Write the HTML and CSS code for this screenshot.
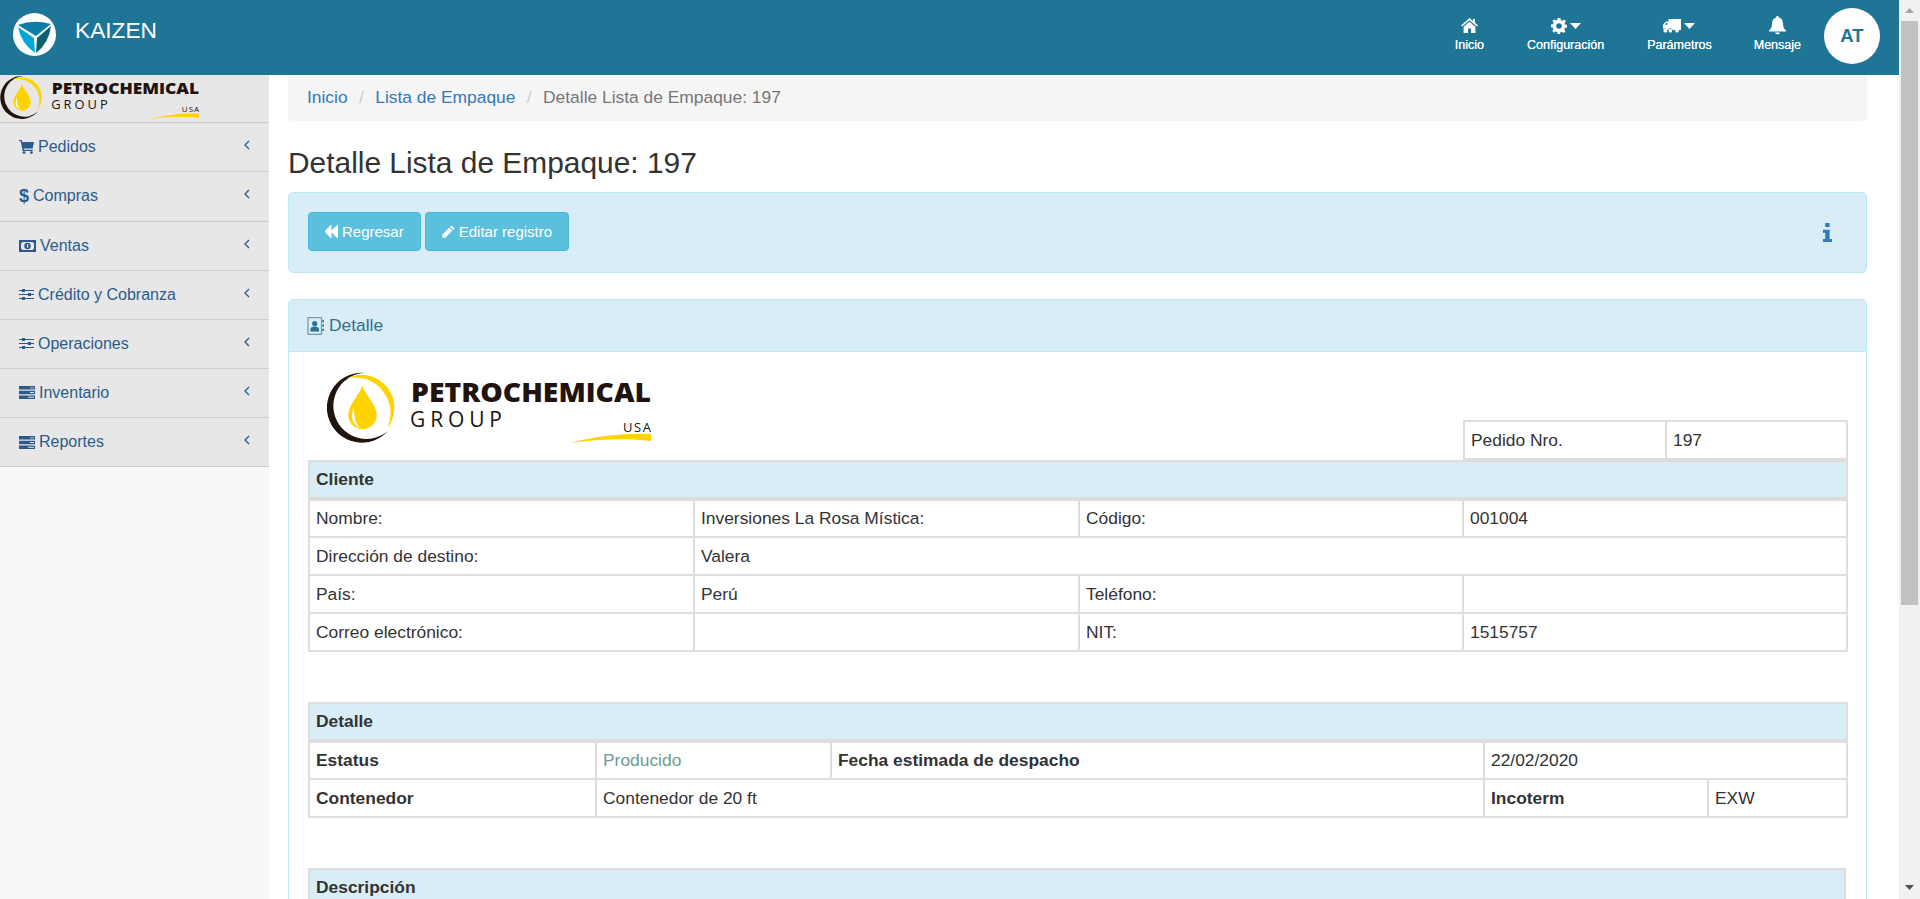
FILE: index.html
```html
<!DOCTYPE html>
<html lang="es">
<head>
<meta charset="utf-8">
<title>Detalle Lista de Empaque: 197</title>
<link rel="stylesheet" href="styles.css">
</head>
<body>
<div class="window">
  <div class="page">
    <header class="navbar">
      <div class="brand">
        <svg class="brand-logo" viewBox="0 0 43 43">
          <circle cx="21.5" cy="21.5" r="21.5" fill="#fff"/>
          <path d="M5 12 Q20 6 38 11 L23 23 Z" fill="#0b7ea6"/>
          <path d="M5 14 L21 25 L22 40 Q8 30 5 14 Z" fill="#00a8d8"/>
          <path d="M24 25 L38 13 Q36 30 23 40 Z" fill="#0c5f6c"/>
        </svg>
        <span class="brand-name">KAIZEN</span>
      </div>
      <nav class="topnav">
        <a class="topnav-item item-home">
          <span class="topnav-icon"><svg width="17" height="15" viewBox="0 0 17 15"><path d="M8.5 0 L12 3 V1 H14 V4.8 L17 7.5 L16 8.6 L8.5 2.2 L1 8.6 L0 7.5 Z M2.6 8.8 L8.5 3.8 L14.4 8.8 V15 H10 V10.5 H7 V15 H2.6 Z" fill="#fff"/></svg></span>
          <span>Inicio</span>
        </a>
        <a class="topnav-item item-conf">
          <span class="topnav-icon"><svg width="16" height="16" viewBox="0 0 16 16"><path fill-rule="evenodd" d="M6.6 0 H9.4 L9.8 2.2 L11.3 2.8 L13.1 1.5 L15 3.4 L13.6 5.2 L14.2 6.6 L16 7 V9.6 L13.9 10 L13.3 11.4 L14.5 13.2 L12.6 15 L10.8 13.7 L9.4 14.2 L9 16 H6.6 L6.2 14 L4.8 13.5 L3 14.7 L1.2 12.8 L2.4 11 L1.8 9.6 L0 9.2 V6.6 L2 6.2 L2.6 4.8 L1.4 3 L3.3 1.2 L5 2.4 L6.3 1.9 Z M8 5.2 A2.8 2.8 0 1 0 8 10.8 A2.8 2.8 0 1 0 8 5.2 Z" fill="#fff"/></svg><svg class="caret" width="11" height="6" viewBox="0 0 11 6"><path d="M0 0 H11 L5.5 6 Z" fill="#fff"/></svg></span>
          <span>Configuración</span>
        </a>
        <a class="topnav-item item-param">
          <span class="topnav-icon"><svg width="18" height="14" viewBox="0 0 18 14"><path fill-rule="evenodd" d="M5.5 0 H18 V11 H9.8 A2.8 2.8 0 0 0 4.6 11 H3.6 A2.6 2.6 0 0 0 0 10 V5.5 L2.8 2.5 H5.5 Z M1.6 5.8 H4.4 V3.8 H3.4 Z" fill="#fff"/><circle cx="2.3" cy="11.7" r="1.9" fill="#fff"/><circle cx="7.3" cy="11.7" r="1.9" fill="#fff"/><circle cx="14" cy="11.7" r="1.9" fill="#fff"/></svg><svg class="caret" width="11" height="6" viewBox="0 0 11 6"><path d="M0 0 H11 L5.5 6 Z" fill="#fff"/></svg></span>
          <span>Parámetros</span>
        </a>
        <a class="topnav-item item-msg">
          <span class="topnav-icon"><svg width="17" height="19" viewBox="0 0 17 19"><path d="M8.5 0 A1.4 1.4 0 0 1 9.9 1.6 C13 2.4 14 5 14 8 C14 11 15 13 17 14.5 V15.6 H0 V14.5 C2 13 3 11 3 8 C3 5 4 2.4 7.1 1.6 A1.4 1.4 0 0 1 8.5 0 Z M6 16.4 H11 A2.6 2.6 0 0 1 6 16.4 Z" fill="#fff"/></svg></span>
          <span>Mensaje</span>
        </a>
        <span class="avatar">AT</span>
      </nav>
    </header>

    <div class="main">
      <aside class="sidebar">
        <div class="side-logo">
          <svg class="logo-small" viewBox="0 0 325 75">
            <path d="M38 1.8 A35 35 0 1 0 61 60 A33.1 33.1 0 1 1 38 1.8 Z" fill="#21130d"/>
            <path d="M19.7 7.3 A33 33 0 0 1 60.3 57.3 A35.9 35.9 0 0 0 19.7 7.3 Z" fill="#ffd200"/>
            <path d="M35.3 15 C32 24 21.3 34 21.3 44 A14.2 14.2 0 0 0 49.7 44 C49.7 34 38.6 24 35.3 15 Z" fill="#ffd200"/>
            <path d="M27 36 C23 44 25 54 33 57 C28 52 27 44 27 36 Z" fill="#fff"/>
            <text x="84" y="31" class="lg-main" textLength="240" lengthAdjust="spacingAndGlyphs">PETROCHEMICAL</text>
            <text x="83" y="56" class="lg-sub" textLength="92">GROUP</text>
            <text x="296" y="61" class="lg-usa" textLength="28">USA</text>
            <path d="M242 72 C270 65 300 62 324 63 V70 C300 67 270 68 242 72 Z" fill="#ffd200"/>
          </svg>
        </div>
        <ul class="menu">
          <li class="menu-item"><span class="menu-label"><svg class="mi" width="15" height="14" viewBox="0 0 15 14"><path d="M0 0 H2.8 L3.3 2 H15 L13.6 8.4 H4.6 L4.9 9.8 H13.8 V11 H3.6 L1.8 1.3 H0 Z" fill="#2b5b8c"/><circle cx="5" cy="12.6" r="1.4" fill="#2b5b8c"/><circle cx="12.4" cy="12.6" r="1.4" fill="#2b5b8c"/></svg>Pedidos</span><svg class="chev" width="6" height="10" viewBox="0 0 6 10"><path d="M5 1 L1 5 L5 9" fill="none" stroke="#2b5b8c" stroke-width="1.3"/></svg></li>
          <li class="menu-item"><span class="menu-label"><span class="dollar">$</span>Compras</span><svg class="chev" width="6" height="10" viewBox="0 0 6 10"><path d="M5 1 L1 5 L5 9" fill="none" stroke="#2b5b8c" stroke-width="1.3"/></svg></li>
          <li class="menu-item"><span class="menu-label"><svg class="mi" width="17" height="12" viewBox="0 0 17 12"><path fill-rule="evenodd" d="M0 0 H17 V12 H0 Z M3.5 2 L2 3.5 V8.5 L3.5 10 H13.5 L15 8.5 V3.5 L13.5 2 Z M8.5 2.8 A3.2 3.2 0 1 1 8.5 9.2 A3.2 3.2 0 1 1 8.5 2.8 Z M8 4.5 V7.8 H9.2 V4 H8.4 Z" fill="#2b5b8c"/></svg>Ventas</span><svg class="chev" width="6" height="10" viewBox="0 0 6 10"><path d="M5 1 L1 5 L5 9" fill="none" stroke="#2b5b8c" stroke-width="1.3"/></svg></li>
          <li class="menu-item"><span class="menu-label"><svg class="mi" width="15" height="13" viewBox="0 0 15 13"><path d="M0 2 H3 V1 H6 V2 H15 V3 H6 V4 H3 V3 H0 Z M0 6 H9 V5 H12 V6 H15 V7 H12 V8 H9 V7 H0 Z M0 10 H3 V9 H6 V10 H15 V11 H6 V12 H3 V11 H0 Z" fill="#2b5b8c"/></svg>Crédito y Cobranza</span><svg class="chev" width="6" height="10" viewBox="0 0 6 10"><path d="M5 1 L1 5 L5 9" fill="none" stroke="#2b5b8c" stroke-width="1.3"/></svg></li>
          <li class="menu-item"><span class="menu-label"><svg class="mi" width="15" height="13" viewBox="0 0 15 13"><path d="M0 2 H3 V1 H6 V2 H15 V3 H6 V4 H3 V3 H0 Z M0 6 H9 V5 H12 V6 H15 V7 H12 V8 H9 V7 H0 Z M0 10 H3 V9 H6 V10 H15 V11 H6 V12 H3 V11 H0 Z" fill="#2b5b8c"/></svg>Operaciones</span><svg class="chev" width="6" height="10" viewBox="0 0 6 10"><path d="M5 1 L1 5 L5 9" fill="none" stroke="#2b5b8c" stroke-width="1.3"/></svg></li>
          <li class="menu-item"><span class="menu-label"><svg class="mi" width="16" height="13" viewBox="0 0 16 13"><path d="M0 0 H16 V3.6 H0 Z M0 4.7 H16 V8.3 H0 Z M0 9.4 H16 V13 H0 Z" fill="#2b5b8c"/><path d="M11 1.4 H15 V2.3 H11 Z M11 6 H15 V7 H11 Z M9 10.8 H15 V11.7 H9 Z" fill="#e7e7e7"/></svg>Inventario</span><svg class="chev" width="6" height="10" viewBox="0 0 6 10"><path d="M5 1 L1 5 L5 9" fill="none" stroke="#2b5b8c" stroke-width="1.3"/></svg></li>
          <li class="menu-item"><span class="menu-label"><svg class="mi" width="16" height="13" viewBox="0 0 16 13"><path d="M0 0 H16 V3.6 H0 Z M0 4.7 H16 V8.3 H0 Z M0 9.4 H16 V13 H0 Z" fill="#2b5b8c"/><path d="M11 1.4 H15 V2.3 H11 Z M11 6 H15 V7 H11 Z M9 10.8 H15 V11.7 H9 Z" fill="#e7e7e7"/></svg>Reportes</span><svg class="chev" width="6" height="10" viewBox="0 0 6 10"><path d="M5 1 L1 5 L5 9" fill="none" stroke="#2b5b8c" stroke-width="1.3"/></svg></li>
        </ul>
      </aside>

      <main class="content">
        <ol class="breadcrumb">
          <li><a>Inicio</a></li>
          <li class="sep">/</li>
          <li><a>Lista de Empaque</a></li>
          <li class="sep">/</li>
          <li class="current">Detalle Lista de Empaque: 197</li>
        </ol>
        <h1 class="title">Detalle Lista de Empaque: 197</h1>
        <section class="alert">
          <div class="actions">
            <a class="btn btn-back"><svg width="13" height="13" viewBox="0 0 14 12" preserveAspectRatio="none"><path d="M7 0 V5 L13 0 H14 V12 H13 L7 7 V12 H6 L0 6.5 V5.5 L6 0 Z" fill="#fff"/></svg>Regresar</a>
            <a class="btn btn-edit"><svg width="13" height="13" viewBox="0 0 13 13"><path d="M9.6 0.4 L12.6 3.4 L11 5 L8 2 Z M7.2 2.8 L10.2 5.8 L3.2 12.8 H0.2 V9.8 Z" fill="#fff"/></svg>Editar registro</a>
          </div>
          <svg class="info" width="9" height="19" viewBox="0 0 9 19"><path d="M2.2 0 H6.6 V4 H2.2 Z M0 6.8 H6.6 V16 H9 V19 H0 V16 H2.2 V9.8 H0 Z" fill="#337ab7"/></svg>
        </section>

        <section class="panel">
          <div class="panel-heading"><svg width="17" height="18" viewBox="0 0 17 18"><path fill-rule="evenodd" d="M1.5 0 H14 A1.2 1.2 0 0 1 15.2 1.2 V16.8 A1.2 1.2 0 0 1 14 18 H1.5 A1.2 1.2 0 0 1 0.3 16.8 V1.2 A1.2 1.2 0 0 1 1.5 0 Z M1.6 1.3 V16.7 H13.9 V1.3 Z" fill="#7d97a8"/><path d="M7.7 4 A2.6 2.6 0 1 1 7.7 9.2 A2.6 2.6 0 1 1 7.7 4 Z M3.4 14.6 V12.4 C3.4 10.6 5 9.6 7.7 9.6 C10.4 9.6 12 10.6 12 12.4 V14.6 Z" fill="#31708f"/><path d="M15.4 3 H17 V5.2 H15.4 Z M15.4 7.4 H17 V9.6 H15.4 Z M15.4 11.8 H17 V14 H15.4 Z" fill="#31708f"/></svg>Detalle</div>
          <div class="panel-body">
            <div class="doc-head">
              <svg class="logo-large" viewBox="0 0 325 75">
                <path d="M38 1.8 A35 35 0 1 0 61 60 A33.1 33.1 0 1 1 38 1.8 Z" fill="#21130d"/>
                <path d="M19.7 7.3 A33 33 0 0 1 60.3 57.3 A35.9 35.9 0 0 0 19.7 7.3 Z" fill="#ffd200"/>
                <path d="M35.3 15 C32 24 21.3 34 21.3 44 A14.2 14.2 0 0 0 49.7 44 C49.7 34 38.6 24 35.3 15 Z" fill="#ffd200"/>
                <path d="M27 36 C23 44 25 54 33 57 C28 52 27 44 27 36 Z" fill="#fff"/>
                <text x="84" y="31" class="lg-main" textLength="240" lengthAdjust="spacingAndGlyphs">PETROCHEMICAL</text>
                <text x="83" y="56" class="lg-sub" textLength="92">GROUP</text>
                <text x="296" y="61" class="lg-usa" textLength="28">USA</text>
                <path d="M242 72 C270 65 300 62 324 63 V70 C300 67 270 68 242 72 Z" fill="#ffd200"/>
              </svg>
              <table class="sheet sheet-order">
                <colgroup><col class="c-o1"><col class="c-o2"></colgroup>
                <tr><td>Pedido Nro.</td><td>197</td></tr>
              </table>
            </div>

            <table class="sheet">
              <colgroup><col class="c-c1"><col class="c-c2"><col class="c-c3"><col class="c-c4"></colgroup>
              <tr><th colspan="4">Cliente</th></tr>
              <tr><td>Nombre:</td><td>Inversiones La Rosa Mística:</td><td>Código:</td><td>001004</td></tr>
              <tr><td>Dirección de destino:</td><td colspan="3">Valera</td></tr>
              <tr><td>País:</td><td>Perú</td><td>Teléfono:</td><td></td></tr>
              <tr><td>Correo electrónico:</td><td></td><td>NIT:</td><td>1515757</td></tr>
            </table>

            <table class="sheet sheet-gap">
              <colgroup><col class="c-d1"><col class="c-d2"><col class="c-d3"><col class="c-d4"><col class="c-d5"></colgroup>
              <tr><th colspan="5">Detalle</th></tr>
              <tr><td class="strong">Estatus</td><td class="status">Producido</td><td class="strong">Fecha estimada de despacho</td><td colspan="2">22/02/2020</td></tr>
              <tr><td class="strong">Contenedor</td><td colspan="2">Contenedor de 20 ft</td><td class="strong">Incoterm</td><td>EXW</td></tr>
            </table>

            <table class="sheet sheet-gap">
              <tr><th>Descripción</th></tr>
            </table>
          </div>
        </section>
      </main>
    </div>
  </div>
  <div class="scrollbar">
    <svg class="sb-arrow" width="9" height="5" viewBox="0 0 9 5"><path d="M4.5 0 L9 5 H0 Z" fill="#a3a3a3"/></svg>
    <div class="sb-thumb"></div>
    <svg class="sb-arrow sb-down" width="9" height="5" viewBox="0 0 9 5"><path d="M0 0 H9 L4.5 5 Z" fill="#505050"/></svg>
  </div>
</div>
</body>
</html>
```

FILE: styles.css
```css
* { box-sizing: border-box; }
html, body { margin: 0; height: 100%; overflow: hidden; }
body { font-family: "Liberation Sans", Arial, sans-serif; font-size: 16px; color: #333; background: #fff; }
.window { display: flex; height: 899px; }
.page { flex: 1; min-width: 0; display: flex; flex-direction: column; overflow: hidden; }

.navbar { flex: none; height: 75px; background: #1f7596; display: flex; justify-content: space-between; align-items: flex-start; }
.brand { display: flex; align-items: center; padding: 13px 0 0 13px; }
.brand-logo { width: 43px; height: 43px; display: block; }
.brand-name { color: #fff; font-size: 22.7px; margin-left: 19px; margin-top: -8px; }
.topnav { display: flex; align-items: flex-start; }
.topnav-item { display: flex; flex-direction: column; align-items: center; color: #fff; font-size: 12.5px; text-shadow: 0 0 0.6px #fff; padding-top: 14px; }
.topnav-icon { height: 23px; margin-bottom: 1px; display: flex; align-items: center; gap: 3px; }
.item-home { margin-right: 43px; }
.item-conf { margin-right: 43px; }
.item-param { margin-right: 42px; }
.item-msg { margin-right: 23px; }
.avatar { width: 56px; height: 56px; margin: 8px 19px 0 0; border-radius: 50%; background: #fff; color: #1f7596; font-weight: bold; font-size: 18.5px; display: flex; align-items: center; justify-content: center; }

.main { flex: 1; min-height: 0; display: flex; }
.sidebar { flex: none; width: 269px; background: #f8f8f8; }
.side-logo { height: 48.3px; background: #e7e7e7; border-bottom: 1px solid #ccc; }
.logo-small { display: block; width: 200px; height: 46px; }
.lg-main { font-family: "Open Sans", sans-serif; font-weight: 800; font-size: 26px; fill: #21130d; }
.lg-sub { font-family: "Open Sans", sans-serif; font-size: 21px; fill: #21130d; }
.lg-usa { font-family: "Open Sans", sans-serif; font-size: 13px; fill: #21130d; }
.menu { list-style: none; margin: 0; padding: 0; }
.menu-item { height: 49.14px; background: #e7e7e7; border-bottom: 1px solid #ccc; display: flex; align-items: center; justify-content: space-between; padding: 0 19px; color: #2b5b8c; }
.menu-label { display: flex; align-items: center; gap: 4px; }
.chev { margin-top: -4px; }
.dollar { font-weight: bold; font-size: 18px; line-height: 16px; width: 10px; }

.content { flex: 1; min-width: 0; padding: 0 32px 0 19px; overflow: hidden; }
.breadcrumb { list-style: none; margin: 0; height: 46px; padding: 0 19px 1px; display: flex; align-items: center; gap: 11.4px; background: #f5f5f5; border-radius: 0 0 5px 5px; font-size: 17.4px; }
.breadcrumb a { color: #337ab7; }
.breadcrumb .sep { color: #ccc; }
.breadcrumb .current { color: #777; }
.title { font-size: 29.9px; font-weight: normal; line-height: 32px; margin: 26px 0 0; }
.alert { margin-top: 13px; height: 81px; padding: 19px 19px 0; background: #d9edf7; border: 1px solid #bce8f1; border-radius: 5px; display: flex; justify-content: space-between; align-items: flex-start; }
.actions { display: flex; gap: 4px; }
.btn { height: 39px; display: flex; align-items: center; gap: 4px; padding: 0 16px; background: #5bc0de; border: 1px solid #46b8da; border-radius: 4px; color: #fff; font-size: 15px; }
.info { margin: 11px 15px 0 0; }

.panel { margin-top: 26px; border: 1px solid #bce8f1; border-radius: 5px 5px 0 0; }
.panel-heading { height: 52px; padding-left: 18px; background: #d9edf7; border-bottom: 1px solid #bce8f1; color: #31708f; font-size: 17.4px; display: flex; align-items: center; gap: 5px; }
.panel-body { padding: 19px 19px 0; }
.doc-head { display: flex; justify-content: space-between; align-items: flex-start; height: 89px; }
.logo-large { display: block; width: 325px; height: 75px; margin-left: 19px; }
.sheet { width: calc(100% - 1px); table-layout: fixed; border-collapse: collapse; font-size: 17.4px; }
.sheet td, .sheet th { border: 2px solid #ddd; padding: 0 6px; height: 38px; text-align: left; }
.sheet th { background: #d9edf7; border-bottom-width: 4px; font-weight: bold; }
.strong { font-weight: bold; }
.status { color: #6d9a94; }
.sheet-gap { margin-top: 50px; }
.sheet-order { width: 383px; margin-top: 49px; margin-right: -1px; }
.c-o1 { width: 202px; } .c-o2 { width: 181px; }
.c-c1 { width: 385px; } .c-c2 { width: 385px; } .c-c3 { width: 384px; } .c-c4 { width: 384px; }
.c-d1 { width: 287px; } .c-d2 { width: 235px; } .c-d3 { width: 653px; } .c-d4 { width: 224px; } .c-d5 { width: 139px; }

.scrollbar { flex: none; width: 21px; background: #f1f1f1; position: relative; display: flex; flex-direction: column; align-items: center; }
.sb-arrow { margin-top: 8px; }
.sb-thumb { width: 17px; height: 584px; margin-top: 8px; background: #c1c1c1; }
.sb-down { margin-top: auto; margin-bottom: 9px; }
```
